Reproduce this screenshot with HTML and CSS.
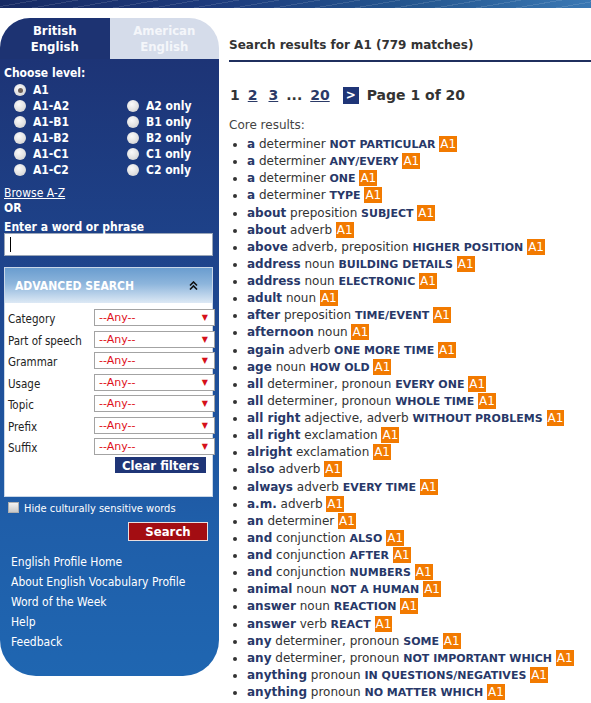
FILE: index.html
```html
<!DOCTYPE html>
<html>
<head>
<meta charset="utf-8">
<link rel="stylesheet" href="styles.css">
</head>
<body>
<div class="banner"></div>
<div class="page">
  <aside class="sidebar">
    <div class="tabs">
      <div class="tab tab-active">British<br>English</div>
      <div class="tab tab-off">American<br>English</div>
    </div>
    <div class="side-body">
      <div class="side-label">Choose level:</div>
      <div class="levels">
        <label class="lvl"><span class="radio checked"></span>A1</label>
        <span></span>
        <label class="lvl"><span class="radio"></span>A1-A2</label>
        <label class="lvl"><span class="radio"></span>A2 only</label>
        <label class="lvl"><span class="radio"></span>A1-B1</label>
        <label class="lvl"><span class="radio"></span>B1 only</label>
        <label class="lvl"><span class="radio"></span>A1-B2</label>
        <label class="lvl"><span class="radio"></span>B2 only</label>
        <label class="lvl"><span class="radio"></span>A1-C1</label>
        <label class="lvl"><span class="radio"></span>C1 only</label>
        <label class="lvl"><span class="radio"></span>A1-C2</label>
        <label class="lvl"><span class="radio"></span>C2 only</label>
      </div>
      <a class="browse" href="#">Browse A-Z</a>
      <div class="side-label">OR</div>
      <div class="side-label enter">Enter a word or phrase</div>
      <div class="word-input"><span class="caret"></span></div>

      <div class="adv">
        <div class="adv-head">
          <span>ADVANCED SEARCH</span>
          <svg class="chev" width="9" height="9" viewBox="0 0 9 9"><path d="M1 4.5 L4.5 1 L8 4.5 M1 8.5 L4.5 5 L8 8.5" fill="none" stroke="#111" stroke-width="1.6"/></svg>
        </div>
        <div class="filters">
          <span class="f-label">Category</span><div class="sel"><span>--Any--</span><span class="arr">▼</span></div>
          <span class="f-label">Part of speech</span><div class="sel"><span>--Any--</span><span class="arr">▼</span></div>
          <span class="f-label">Grammar</span><div class="sel"><span>--Any--</span><span class="arr">▼</span></div>
          <span class="f-label">Usage</span><div class="sel"><span>--Any--</span><span class="arr">▼</span></div>
          <span class="f-label">Topic</span><div class="sel"><span>--Any--</span><span class="arr">▼</span></div>
          <span class="f-label">Prefix</span><div class="sel"><span>--Any--</span><span class="arr">▼</span></div>
          <span class="f-label">Suffix</span><div class="sel"><span>--Any--</span><span class="arr">▼</span></div>
        </div>
        <div class="clear-row"><span class="clear-btn">Clear filters</span></div>
      </div>

      <label class="hide-row"><span class="checkbox"></span>Hide culturally sensitive words</label>
      <div class="search-row"><span class="search-btn">Search</span></div>

      <nav class="side-links">
        <a href="#">English Profile Home</a>
        <a href="#">About English Vocabulary Profile</a>
        <a href="#">Word of the Week</a>
        <a href="#">Help</a>
        <a href="#">Feedback</a>
      </nav>
    </div>
  </aside>

  <main class="results">
    <h2 class="res-title">Search results for A1 (779 matches)</h2>
    <div class="pager">
      <span>1</span><a href="#">2</a><a class="wide" href="#">3</a><span>...</span><a href="#">20</a><span class="next">&gt;</span><span class="pg">Page 1 of 20</span>
    </div>
    <div class="core">Core results:</div>
    <ul class="list">
      <li><b>a</b> determiner <em>NOT PARTICULAR</em> <i>A1</i></li>
      <li><b>a</b> determiner <em>ANY/EVERY</em> <i>A1</i></li>
      <li><b>a</b> determiner <em>ONE</em> <i>A1</i></li>
      <li><b>a</b> determiner <em>TYPE</em> <i>A1</i></li>
      <li><b>about</b> preposition <em>SUBJECT</em> <i>A1</i></li>
      <li><b>about</b> adverb <i>A1</i></li>
      <li><b>above</b> adverb, preposition <em>HIGHER POSITION</em> <i>A1</i></li>
      <li><b>address</b> noun <em>BUILDING DETAILS</em> <i>A1</i></li>
      <li><b>address</b> noun <em>ELECTRONIC</em> <i>A1</i></li>
      <li><b>adult</b> noun <i>A1</i></li>
      <li><b>after</b> preposition <em>TIME/EVENT</em> <i>A1</i></li>
      <li><b>afternoon</b> noun <i>A1</i></li>
      <li><b>again</b> adverb <em>ONE MORE TIME</em> <i>A1</i></li>
      <li><b>age</b> noun <em>HOW OLD</em> <i>A1</i></li>
      <li><b>all</b> determiner, pronoun <em>EVERY ONE</em> <i>A1</i></li>
      <li><b>all</b> determiner, pronoun <em>WHOLE TIME</em> <i>A1</i></li>
      <li><b>all right</b> adjective, adverb <em>WITHOUT PROBLEMS</em> <i>A1</i></li>
      <li><b>all right</b> exclamation <i>A1</i></li>
      <li><b>alright</b> exclamation <i>A1</i></li>
      <li><b>also</b> adverb <i>A1</i></li>
      <li><b>always</b> adverb <em>EVERY TIME</em> <i>A1</i></li>
      <li><b>a.m.</b> adverb <i>A1</i></li>
      <li><b>an</b> determiner <i>A1</i></li>
      <li><b>and</b> conjunction <em>ALSO</em> <i>A1</i></li>
      <li><b>and</b> conjunction <em>AFTER</em> <i>A1</i></li>
      <li><b>and</b> conjunction <em>NUMBERS</em> <i>A1</i></li>
      <li><b>animal</b> noun <em>NOT A HUMAN</em> <i>A1</i></li>
      <li><b>answer</b> noun <em>REACTION</em> <i>A1</i></li>
      <li><b>answer</b> verb <em>REACT</em> <i>A1</i></li>
      <li><b>any</b> determiner, pronoun <em>SOME</em> <i>A1</i></li>
      <li><b>any</b> determiner, pronoun <em>NOT IMPORTANT WHICH</em> <i>A1</i></li>
      <li><b>anything</b> pronoun <em>IN QUESTIONS/NEGATIVES</em> <i>A1</i></li>
      <li><b>anything</b> pronoun <em>NO MATTER WHICH</em> <i>A1</i></li>
    </ul>
  </main>
</div>
</body>
</html>
```

FILE: styles.css
```css
* { box-sizing: border-box; }
html, body { margin: 0; padding: 0; background: #fff; }
body { font-family: "DejaVu Sans", Verdana, sans-serif; color: #333; overflow: hidden; }

.banner {
  height: 8px;
  background:
    repeating-linear-gradient(170deg, rgba(255,255,255,0) 0 6px, rgba(255,255,255,0.12) 6px 7px),
    linear-gradient(90deg, #172a63 0%, #1d3a7c 35%, #24568f 70%, #3a78b4 100%);
}

.page { display: flex; align-items: flex-start; }

/* ---------- sidebar ---------- */
.sidebar {
  width: 219px;
  flex: none;
  margin-top: 10px;
  font-family: "DejaVu Sans Condensed", "Liberation Sans", sans-serif;
  color: #fff;
}
.tabs { display: flex; height: 41px; }
.tab {
  flex: 1;
  display: flex; align-items: center; justify-content: center;
  text-align: center;
  font-weight: bold; font-size: 13px; line-height: 16px;
  color: #fff;
}
.tab-active { background: #1d3372; border-top-left-radius: 30px; }
.tab-off { background: #d5dcea; color: #f4f6fa; border-top-right-radius: 30px; }

.side-body {
  background: linear-gradient(180deg, #1d3476 0%, #1e4790 40%, #1f5ea9 75%, #1f66b1 100%);
  padding: 7px 0 24px;
  border-bottom-left-radius: 36px;
  border-bottom-right-radius: 36px;
}
.side-label {
  font-weight: bold; font-size: 12px; line-height: 15px;
  padding-left: 4px;
}
.side-label.enter { margin-top: 5px; line-height: 12px; margin-bottom: 0; }

.levels {
  display: grid;
  grid-template-columns: 113px 1fr;
  grid-auto-rows: 16px;
  margin-top: 1px;
  padding-left: 14px;
}
.lvl {
  display: flex; align-items: center;
  font-weight: bold; font-size: 12px;
}
.radio {
  width: 12px; height: 12px; border-radius: 50%;
  background: radial-gradient(circle at 40% 35%, #fafafa 0%, #e2e2e2 55%, #c6c6c6 100%);
  margin-right: 7px;
  display: inline-flex; align-items: center; justify-content: center;
}
.radio.checked::after {
  content: ""; width: 5px; height: 5px; border-radius: 50%; background: #6b5f5a;
}

.browse {
  display: block;
  margin-top: 8px;
  padding-left: 4px;
  color: #fff;
  font-size: 12px; line-height: 15px;
  text-decoration: underline;
}

.word-input {
  margin: 0 6px 0 4px;
  height: 23px;
  background: #fff;
  border: 1px solid #9aa6b8;
  display: flex; align-items: center;
  padding-left: 5px;
}
.caret { width: 1px; height: 15px; background: #000; }

.adv {
  margin: 11px 6px 0 4px;
  background: #fff;
  border: 1px solid #c9d7e8;
  padding-bottom: 23px;
}
.adv-head {
  height: 35px;
  background: linear-gradient(180deg, #6a9dcf 0%, #8db5dc 45%, #dde9f5 100%);
  display: flex; align-items: center; justify-content: space-between;
  padding: 0 14px 0 10px;
  font-weight: bold; font-size: 12px; color: #fff;
}
.chev { display: block; }

.filters {
  display: grid;
  grid-template-columns: 86px 121px;
  grid-auto-rows: 17px;
  row-gap: 4.5px;
  padding: 6px 0 0 3px;
}
.f-label {
  font-size: 11.5px; color: #222;
  display: flex; align-items: center;
  padding-top: 3px;
}
.sel {
  border: 1px solid #a3a3a3;
  background: #fff;
  display: flex; align-items: center; justify-content: space-between;
  padding: 0 6px 0 4px;
  font-family: "DejaVu Sans", sans-serif;
  font-size: 11px; color: #e0101a;
}
.arr { font-size: 8px; color: #d5101a; }

.clear-row { display: flex; justify-content: flex-end; padding-right: 6px; margin-top: 2px; }
.clear-btn {
  width: 91px; height: 16px;
  background: #1f3577; color: #fff;
  font-weight: bold; font-size: 13px;
  display: flex; align-items: center; justify-content: center;
}

.hide-row {
  display: flex; align-items: center;
  margin-top: 5px;
  padding-left: 8px;
  font-size: 11px; line-height: 14px;
}
.checkbox {
  width: 11px; height: 11px;
  background: linear-gradient(180deg, #f2f2f2, #c9c9c9);
  border: 1px solid #b0b0b0;
  margin-right: 5px;
  position: relative; top: -2px;
}
.search-row { display: flex; justify-content: flex-end; padding-right: 11px; margin-top: 6px; }
.search-btn {
  width: 80px; height: 19px;
  background: #a30d12; color: #fff;
  border: 1px solid #e9dede;
  font-weight: bold; font-size: 13px;
  display: flex; align-items: center; justify-content: center;
}

.side-links {
  display: flex; flex-direction: column;
  margin-top: 11px;
  padding-left: 11px;
}
.side-links a {
  color: #fff; text-decoration: none;
  font-size: 12px; line-height: 20px;
}

/* ---------- results ---------- */
.results {
  flex: 1;
  padding-left: 10px;
  min-width: 0;
}
.res-title {
  margin: 0;
  padding-top: 29px; padding-bottom: 7px;
  font-size: 12px; line-height: 16px; font-weight: bold; color: #333;
  border-bottom: 2px solid #1f2f5e;
}
.pager {
  margin-top: 24px;
  display: flex; align-items: center; gap: 8px;
  font-size: 14px; line-height: 18px; font-weight: bold; color: #333;
  padding-left: 1px;
}
.pager a { color: #2b3a67; text-decoration: underline; }
.pager .wide { margin-left: 3px; }
.pager .next {
  width: 16px; height: 17px;
  background: #1f3577; color: #fff;
  display: flex; align-items: center; justify-content: center;
  font-size: 12px;
  margin-left: 5px;
}
.core {
  margin-top: 13px;
  font-size: 12px; line-height: 16px; color: #444;
}
.list {
  margin: 3px 0 0;
  padding-left: 18px;
  font-size: 12px; line-height: 17px;
  color: #333;
  white-space: nowrap;
}
.list li { height: 17.125px; }
.list b { color: #283868; font-weight: bold; }
.list em { font-style: normal; font-weight: bold; font-size: 11px; color: #283868; }
.list i {
  font-style: normal;
  background: #f27a00; color: #fff;
  padding: 1px 1px;
}
```
